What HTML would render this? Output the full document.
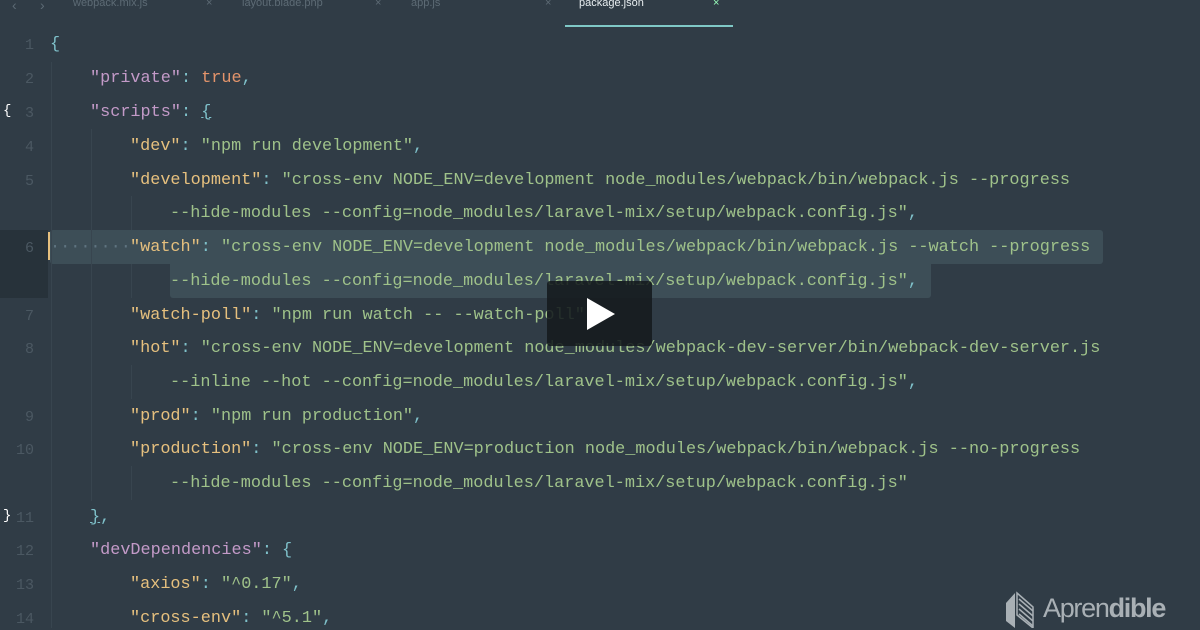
<!DOCTYPE html>
<html><head><meta charset="utf-8"><style>
body{margin:0;width:1200px;height:628px;overflow:hidden;background:#303c46;font-family:"Liberation Mono",monospace;}
.tabs{position:absolute;top:0;left:0;width:1200px;height:28px;font-family:"Liberation Sans",sans-serif;font-size:11px;color:#5d6b75;}
.tabs span{position:absolute;top:-3px}
.w{position:absolute;left:0;top:2px;width:1200px;height:628px}
.ln{position:absolute;left:0;width:34px;text-align:right;color:#4b5862;font-size:15px;font-family:"Liberation Mono",monospace}
.l{position:absolute;white-space:pre;font-size:16.85px;color:#9fc28a}
.p{color:#c39ac8}.y{color:#e6c07e}.g{color:#a5c48a}.c{color:#7fc1ca}.o{color:#e3946b}.d{color:#5f7480}
.guide{position:absolute;width:1px;background:#38454f}
</style></head><body>
<div class="tabs">
<span style="left:12px;font-size:14px">‹</span><span style="left:40px;font-size:14px">›</span>
<span style="left:73px">webpack.mix.js</span><span style="left:206px">×</span>
<span style="left:242px">layout.blade.php</span><span style="left:375px">×</span>
<span style="left:411px">app.js</span><span style="left:545px">×</span>
<span style="left:579px;color:#e8eef0">package.json</span><span style="left:713px;color:#9fb">×</span>
<div style="position:absolute;left:565px;top:25px;width:168px;height:2px;background:#7fc8c6"></div>
</div>
<div style="position:absolute;left:0;top:230px;width:48px;height:68px;background:#27323a"></div>
<div style="position:absolute;left:50px;top:230px;width:1053px;height:34px;background:#3d4e57;border-radius:3px"></div>
<div style="position:absolute;left:170px;top:263px;width:761px;height:35px;background:#3d4e57;border-radius:0 0 3px 3px"></div>
<div style="position:absolute;left:48px;top:232px;width:2px;height:28px;background:#e6c07e"></div>
<div class="guide" style="left:51px;top:62px;height:566px"></div>
<div class="guide" style="left:91px;top:129px;height:372px"></div>
<div class="guide" style="left:131px;top:196px;height:34px"></div>
<div class="guide" style="left:131px;top:264px;height:34px"></div>
<div class="guide" style="left:131px;top:365px;height:34px"></div>
<div class="guide" style="left:131px;top:466px;height:34px"></div>
<div class="w">
<div class="ln" style="top:35px">1</div>
<div class="ln" style="top:69px">2</div>
<div class="ln" style="top:103px">3</div><div style="position:absolute;left:3px;top:101px;color:#fff;font-size:14px">{</div>
<div class="ln" style="top:137px">4</div>
<div class="ln" style="top:171px">5</div>
<div class="ln" style="top:238px">6</div>
<div class="ln" style="top:306px">7</div>
<div class="ln" style="top:339px">8</div>
<div class="ln" style="top:407px">9</div>
<div class="ln" style="top:440px">10</div>
<div class="ln" style="top:508px">11</div><div style="position:absolute;left:3px;top:506px;color:#fff;font-size:14px">}</div>
<div class="ln" style="top:541px">12</div>
<div class="ln" style="top:575px">13</div>
<div class="ln" style="top:609px">14</div>

<div class="l c" style="left:50px;top:33px">{</div>
<div class="l" style="left:90px;top:67px"><span class="p">"private"</span><span class="c">: </span><span class="o">true</span><span class="c">,</span></div>
<div class="l" style="left:90px;top:101px"><span class="p">"scripts"</span><span class="c">: <u>{</u></span></div>
<div class="l" style="left:130px;top:135px"><span class="y">"dev"</span><span class="c">: </span>"npm run development"<span class="c">,</span></div>
<div class="l" style="left:130px;top:169px"><span class="y">"development"</span><span class="c">: </span>"cross-env NODE_ENV=development node_modules/webpack/bin/webpack.js --progress</div>
<div class="l" style="left:170px;top:202px">--hide-modules --config=node_modules/laravel-mix/setup/webpack.config.js"<span class="c">,</span></div>
<div class="l d" style="left:50px;top:236px">········</div>
<div class="l" style="left:130px;top:236px"><span class="y">"watch"</span><span class="c">: </span>"cross-env NODE_ENV=development node_modules/webpack/bin/webpack.js --watch --progress</div>
<div class="l" style="left:170px;top:270px">--hide-modules --config=node_modules/laravel-mix/setup/webpack.config.js"<span class="c">,</span></div>
<div class="l" style="left:130px;top:304px"><span class="y">"watch-poll"</span><span class="c">: </span>"npm run watch -- --watch-poll"<span class="c">,</span></div>
<div class="l" style="left:130px;top:337px"><span class="y">"hot"</span><span class="c">: </span>"cross-env NODE_ENV=development node_modules/webpack-dev-server/bin/webpack-dev-server.js</div>
<div class="l" style="left:170px;top:371px">--inline --hot --config=node_modules/laravel-mix/setup/webpack.config.js"<span class="c">,</span></div>
<div class="l" style="left:130px;top:405px"><span class="y">"prod"</span><span class="c">: </span>"npm run production"<span class="c">,</span></div>
<div class="l" style="left:130px;top:438px"><span class="y">"production"</span><span class="c">: </span>"cross-env NODE_ENV=production node_modules/webpack/bin/webpack.js --no-progress</div>
<div class="l" style="left:170px;top:472px">--hide-modules --config=node_modules/laravel-mix/setup/webpack.config.js"</div>
<div class="l c" style="left:90px;top:506px"><u>}</u>,</div>
<div class="l" style="left:90px;top:539px"><span class="p">"devDependencies"</span><span class="c">: {</span></div>
<div class="l" style="left:130px;top:573px"><span class="y">"axios"</span><span class="c">: </span>"^0.17"<span class="c">,</span></div>
<div class="l" style="left:130px;top:607px"><span class="y">"cross-env"</span><span class="c">: </span>"^5.1"<span class="c">,</span></div>
</div>
<div style="position:absolute;left:547px;top:281px;width:105px;height:65px;background:rgba(20,26,30,0.88);border-radius:3px"></div>
<svg style="position:absolute;left:587px;top:298px" width="28" height="32"><path d="M0 0 L28 16 L0 32Z" fill="#fff"/></svg>

<svg style="position:absolute;left:1004px;top:591px" width="32" height="37"><path d="M11 2 L11 37 L2 30 L2 12Z" fill="#a9b0b5"/><path d="M13 2 L29 16 L29 37 L13 24Z" fill="none" stroke="#a9b0b5" stroke-width="1.5"/><path d="M15 8 L29 20 M15 13 L29 25 M15 18 L29 30 M15 23 L29 35" stroke="#a9b0b5" stroke-width="1.5"/></svg>
<div style="position:absolute;left:1043px;top:593px;font-family:'Liberation Sans',sans-serif;font-size:27px;color:#a9b0b5;letter-spacing:-1.3px"><span style="font-weight:300">Apren</span><span style="font-weight:bold">dible</span></div>
</body></html>
